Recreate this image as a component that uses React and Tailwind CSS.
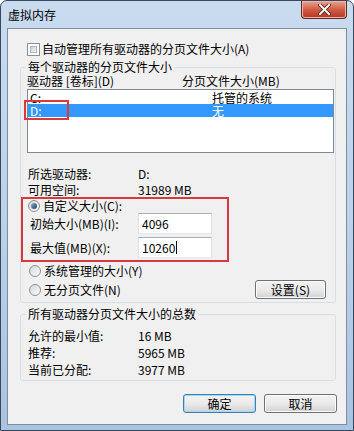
import React from 'react';

const font = { fontFamily: '"Noto Sans CJK SC", "Noto Sans", sans-serif' };

function Checkbox() {
    return (
        <div className="w-[13px] h-[13px] border border-[#8e8f8f] bg-white p-[2px] shrink-0">
            <div className="w-full h-full bg-gradient-to-br from-[#cbcfd5] to-[#f6f6f6] border border-[#aeb3b9]" />
        </div>
    );
}

function Radio({ checked }) {
    return (
        <div className="w-[12px] h-[12px] rounded-full border border-[#8e8f8f] bg-gradient-to-br from-[#d4d7db] to-[#fbfbfb] flex items-center justify-center shrink-0">
            {checked && <div className="w-[6px] h-[6px] rounded-full bg-gradient-to-br from-[#8fb1d6] to-[#1c3a63]" />}
        </div>
    );
}

function WinButton({ children, primary, className = '' }) {
    return (
        <div
            className={`h-[19px] rounded-[3px] border flex items-center justify-center text-[12px] text-black bg-gradient-to-b from-[#f2f2f2] via-[#ebebeb] to-[#d2d2d2] ${primary ? 'border-[#3c7fb1] shadow-[inset_0_0_0_1px_#9fd8f4]' : 'border-[#707070] shadow-[inset_0_0_0_1px_#fcfcfc]'} ${className}`}
        >
            {children}
        </div>
    );
}

function Field({ value, cursor }) {
    return (
        <div className="w-[74px] h-[21px] bg-white border border-[#abadb3] border-l-[#e2e3ea] border-r-[#dbdfe6] border-b-[#e3e9ef] flex items-center pl-[3px] text-[12px]">
            <span>{value}</span>
            {cursor && <span className="w-[1px] h-[13px] bg-black ml-[1px]" />}
        </div>
    );
}

export default function App() {
    return (
        <div
            className="w-[354px] h-[431px] flex flex-col bg-gradient-to-b from-[#c9dbef] via-[#bcd2ea] to-[#a9c3e0] border border-[#37485c] rounded-t-[7px] overflow-hidden text-black"
            style={font}
        >
            {/* title bar */}
            <div className="h-[27px] flex items-start shrink-0">
                <div className="pl-[7px] pt-[6px] text-[12px] leading-[16px] text-black">虚拟内存</div>
                <div className="ml-auto mr-[6px] w-[46px] h-[18px] rounded-b-[4px] border border-t-0 border-[#5a2c24] bg-gradient-to-b from-[#e8a493] via-[#cf5c44] to-[#b8331d] flex items-center justify-center shadow-[inset_0_0_0_1px_#f1b3a5]">
                    <svg width="13" height="11" viewBox="0 0 13 11">
                        <path d="M2 1 L11 10 M11 1 L2 10" stroke="#4a1a10" strokeWidth="3.6" strokeLinecap="square" />
                        <path d="M2 1 L11 10 M11 1 L2 10" stroke="#ffffff" strokeWidth="2" strokeLinecap="square" />
                    </svg>
                </div>
            </div>

            {/* client area */}
            <div className="ml-[6px] mr-[6px] h-[397px] bg-[#f0f0f0] border border-[#7d8ea3] flex flex-col px-[12px] text-[12px] leading-[16px]">
                <div className="mt-[12px] h-[16px] flex items-center pl-[7px] gap-[2px]">
                    <Checkbox />
                    <span>自动管理所有驱动器的分页文件大小(A)</span>
                </div>

                <fieldset className="mt-[2px] w-[316px] border border-[#d5dfe5] rounded-[3px] pb-[3px]">
                    <legend className="ml-[5px] px-[2px] h-[16px] leading-[16px]">每个驱动器的分页文件大小</legend>
                    <div className="h-[12px] flex items-center pl-[6px] leading-[12px]">
                        <span className="w-[155px]">驱动器 [卷标](D)</span>
                        <span>分页文件大小(MB)</span>
                    </div>
                    <div className="relative mt-[2px] ml-[6px] w-[307px] h-[64px] bg-white border border-[#828790] pt-[1px]">
                        <div className="h-[13px] flex items-center leading-[12px]">
                            <span className="pl-[2px] w-[184px]">C:</span>
                            <span>托管的系统</span>
                        </div>
                        <div className="h-[13px] flex items-center leading-[12px] bg-[#3399ff] text-white">
                            <span className="pl-[2px] w-[184px]">D:</span>
                            <span>无</span>
                        </div>
                        <div className="absolute left-[-4px] top-[10px] w-[45px] h-[20px] border-2 border-[#d8393b]" />
                    </div>

                    <div className="mt-[13px] h-[16px] flex items-center pl-[7px]">
                        <span className="w-[110px]">所选驱动器:</span>
                        <span>D:</span>
                    </div>
                    <div className="h-[16px] flex items-center pl-[7px]">
                        <span className="w-[110px]">可用空间:</span>
                        <span>31989 MB</span>
                    </div>

                    <div className="mt-[-1px] w-[208px] border-2 border-[#d8393b] pb-[2px]">
                        <div className="h-[14px] flex items-center pl-[5px] gap-[3px]">
                            <Radio checked />
                            <span>自定义大小(C):</span>
                        </div>
                        <div className="h-[21px] flex items-center pl-[7px]">
                            <span className="w-[108px]">初始大小(MB)(I):</span>
                            <Field value="4096" />
                        </div>
                        <div className="mt-[3px] h-[21px] flex items-center pl-[7px]">
                            <span className="w-[108px]">最大值(MB)(X):</span>
                            <Field value="10260" cursor />
                        </div>
                    </div>

                    <div className="mt-[1px] h-[16px] flex items-center pl-[8px] gap-[3px]">
                        <Radio />
                        <span>系统管理的大小(Y)</span>
                    </div>
                    <div className="h-[19px] mt-[1px] flex items-center pl-[8px] gap-[3px]">
                        <Radio />
                        <span>无分页文件(N)</span>
                        <WinButton className="ml-auto mr-[9px] w-[71px]">设置(S)</WinButton>
                    </div>
                </fieldset>

                <fieldset className="mt-[3px] w-[316px] border border-[#d5dfe5] rounded-[3px] pt-[5px] pb-[2px]">
                    <legend className="ml-[5px] px-[2px] h-[16px] leading-[16px]">所有驱动器分页文件大小的总数</legend>
                    <div className="h-[17px] flex items-center pl-[7px]">
                        <span className="w-[110px]">允许的最小值:</span>
                        <span>16 MB</span>
                    </div>
                    <div className="h-[17px] flex items-center pl-[7px]">
                        <span className="w-[110px]">推荐:</span>
                        <span>5965 MB</span>
                    </div>
                    <div className="h-[17px] flex items-center pl-[7px]">
                        <span className="w-[110px]">当前已分配:</span>
                        <span>3977 MB</span>
                    </div>
                </fieldset>

                <div className="mt-[13px] flex justify-end gap-[8px] mr-[-3px]">
                    <WinButton primary className="w-[73px]">确定</WinButton>
                    <WinButton className="w-[73px]">取消</WinButton>
                </div>
            </div>
        </div>
    );
}
